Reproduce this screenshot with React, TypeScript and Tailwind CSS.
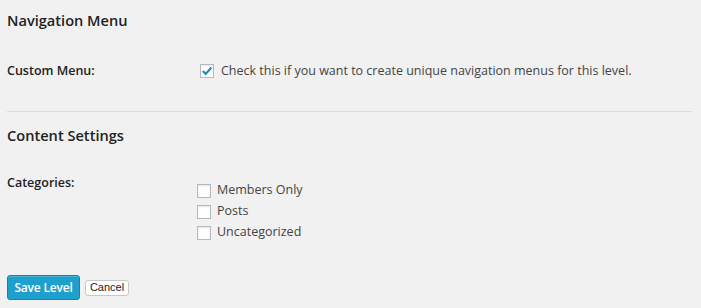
import React from 'react';

const Box: React.FC<{ checked?: boolean }> = ({ checked }) => (
  <span className="w-[14px] h-[14px] shrink-0 bg-white border border-[#b4b9be] shadow-[inset_0_1px_2px_rgba(0,0,0,0.1)] flex items-center justify-center">
    {checked && (
      <svg width="12" height="12" viewBox="0 0 12 12">
        <path d="M1.8 6 L4.7 8.9 L10.4 2.6" fill="none" stroke="#1e8cbe" strokeWidth="2.2" />
      </svg>
    )}
  </span>
);

export default function App() {
  const cats = ['Members Only', 'Posts', 'Uncategorized'];
  return (
    <div className="w-[701px] h-[308px] bg-[#f1f1f1] font-['Open_Sans',sans-serif] text-[#444] text-[12.5px] px-[7px] pt-[9px] overflow-hidden">
      <h2 className="text-[14.6px] font-semibold text-[#222] leading-[22px]">Navigation Menu</h2>
      <div className="flex items-center mt-[30px] h-[20px]">
        <div className="w-[193px] font-semibold text-[#222]">Custom Menu:</div>
        <Box checked />
        <span className="ml-[7px]">Check this if you want to create unique navigation menus for this level.</span>
      </div>
      <div className="mt-[30px] mr-[2px] border-t border-[#dcdcdc]" />
      <h2 className="text-[14.6px] font-semibold text-[#222] leading-[22px] mt-[12px]">Content Settings</h2>
      <div className="flex mt-[27px]">
        <div className="w-[190px] font-semibold text-[#222] leading-[20px]">Categories:</div>
        <div className="flex flex-col pt-[7px]">
          {cats.map((c) => (
            <label key={c} className="flex items-center h-[21px]">
              <Box />
              <span className="ml-[6px]">{c}</span>
            </label>
          ))}
        </div>
      </div>
      <div className="flex items-center gap-[5px] mt-[32px]">
        <button className="h-[25px] w-[73px] rounded-[3px] bg-[#1ea0cc] border border-[#0e86b2] text-white text-[12px] font-semibold tracking-[-0.2px] shadow-[inset_0_1px_0_rgba(120,200,230,0.5)]">
          Save Level
        </button>
        <button className="h-[16px] w-[44px] rounded-[3px] bg-white border border-[#c8c8c8] text-[#222] text-[11px] font-['Liberation_Sans',sans-serif] leading-none">
          Cancel
        </button>
      </div>
    </div>
  );
}
